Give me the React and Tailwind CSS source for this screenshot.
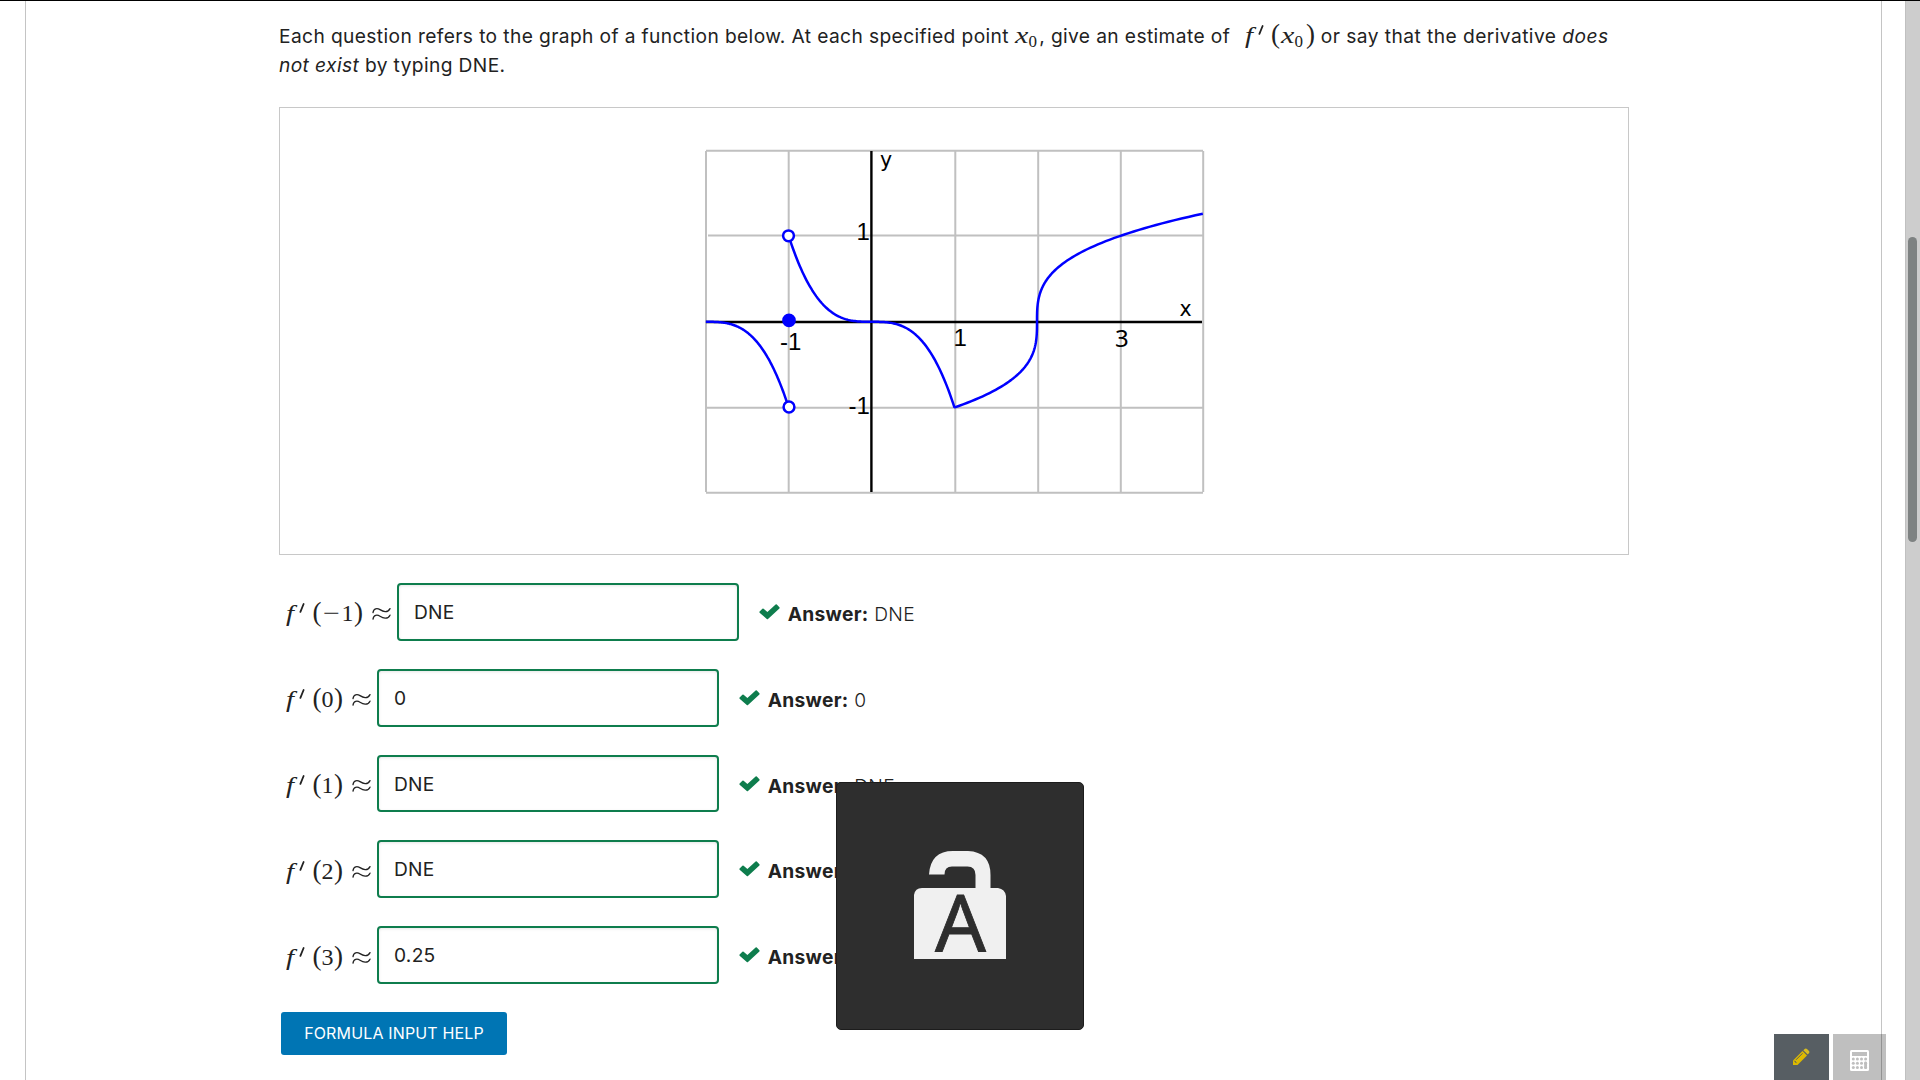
import React from "react";

const X0 = 165.6;
const Y0 = 171.8;
const UX = 82.9;
const UY = 85.8;

function curve(fn, from, to, steps = 120) {
  const pts = [];
  for (let i = 0; i <= steps; i++) {
    const x = from + ((to - from) * i) / steps;
    pts.push(`${(X0 + x * UX).toFixed(2)},${(Y0 - fn(x) * UY).toFixed(2)}`);
  }
  return pts.join(" ");
}

// Sampled along y, so the vertical tangent at x = 2 stays smooth.
function cubeRootBranch() {
  const pts = [];
  const end = Math.cbrt(2);
  for (let i = 0; i <= 120; i++) {
    const y = -1 + ((end + 1) * i) / 120;
    const x = 2 + y * y * y;
    pts.push(`${(X0 + x * UX - 0.4).toFixed(2)},${(Y0 - y * UY).toFixed(2)}`);
  }
  return pts.join(" ");
}

function Graph() {
  return (
    <svg width="500" height="345" viewBox="0 0 500 345" className="block shrink-0 overflow-visible" fill="none">
      <g stroke="#c0c0c0" strokeWidth="2">
        <path d="M0 .8H497M2 85.5H497M1 257.7H497M0 342.7H497" />
        <path d="M0 1V342M82.7 1V342M249.3 1V342M332.2 1V342M414.8 1V342M497.2 1V342" />
      </g>
      <path d="M165.4 1V342M0 172H496" stroke="#000" strokeWidth="2.4" />
      <g fill="#000" fontSize="20.5" fontFamily='"DejaVu Sans", sans-serif'>
        <text x="174" y="17">y</text>
        <text x="473.5" y="165.5">x</text>
      </g>
      <g fill="#000" fontSize="24" fontFamily='"Liberation Sans", sans-serif'>
        <text x="150.5" y="90.2">1</text>
        <text x="74" y="200.2">-1</text>
        <text x="142.5" y="264.2">-1</text>
        <text x="247.5" y="195.5">1</text>
        <text x="409" y="197.2" fontFamily='"Noto Sans", sans-serif'>3</text>
      </g>
      <g stroke="#00f" strokeWidth="2.5" strokeLinejoin="round">
        <polyline points={curve((x) => -Math.pow(x + 2, 3), -2, -1)} />
        <polyline points={curve((x) => -Math.pow(x, 3), -1, 1)} />
        <polyline points={cubeRootBranch()} />
        <circle cx="82.5" cy="85.8" r="5.4" fill="#fff" />
        <circle cx="83" cy="257" r="5.4" fill="#fff" />
        <circle cx="83" cy="170.4" r="5.6" fill="#00f" />
      </g>
    </svg>
  );
}

function FPrime() {
  return (
    <>
      <span className="w-[17px] pl-[4px] italic">
        <span className="inline-block origin-left scale-x-[1.2]">f</span>
      </span>
      <span className="w-[11px]">
        <svg width="7" height="18" viewBox="0 0 7 18" className="inline-block align-baseline">
          <path d="M4.6 1L1.4 8.8" stroke="#222" strokeWidth="1.8" strokeLinecap="round" />
        </svg>
      </span>
    </>
  );
}

function Label({ value }) {
  const negative = value < 0;
  return (
    <span className="flex shrink-0 items-baseline whitespace-nowrap pt-[2px] font-['Liberation_Serif',serif] text-[24px] leading-[30px] text-[#222]">
      <FPrime />
      <span className="ml-[2.5px] w-[9px] text-[27px]">(</span>
      {negative && (
        <span className="w-[20px] pl-px">
          <span className="inline-block origin-left scale-x-[1.25]">−</span>
        </span>
      )}
      <span className="w-[12.5px]">{Math.abs(value)}</span>
      <span className="w-[18px] text-[27px]">)</span>
      <svg width="19" height="14" viewBox="0 0 19 14" className="mr-[6px]" fill="none" stroke="#222" strokeWidth="1.3" strokeLinecap="round">
        <path d="M1 5.6C1.6 1.2 5.2 .8 8 2.6S15.6 6.4 18 1.6M1 12.2C1.6 7.8 5.2 7.4 8 9.2S15.6 13 18 8.2" />
      </svg>
    </span>
  );
}

function Check() {
  return (
    <svg width="21" height="16" viewBox="0 0 21 16" className="mr-[7.5px] shrink-0">
      <path d="M.6 7.5L3.4 4.7q.6-.5 1.2 0L8.4 8 16.6.6q.6-.5 1.2 0l2.6 2.7q.5.6 0 1.1L9 15q-.6.6-1.2 0L.6 8.7q-.5-.6 0-1.2z" fill="#0e7d4d" />
    </svg>
  );
}

const answers = [
  { value: -1, text: "DNE" },
  { value: 0, text: "0" },
  { value: 1, text: "DNE" },
  { value: 2, text: "DNE" },
  { value: 3, text: "0.25" },
];

function AnswerRow({ value, text }) {
  return (
    <div className="flex h-[57.8px] items-center">
      <Label value={value} />
      <input
        readOnly
        value={text}
        className="h-[57.8px] w-[342.2px] shrink-0 rounded-[4px] border-2 border-[#0e7d4d] bg-white px-[15px] text-[19.2px] tracking-[0.25px] text-[#222] shadow-[inset_0_1px_3px_rgba(0,0,0,0.1)] outline-none"
      />
      <span className="ml-5 flex items-center text-[19.2px] leading-[28.8px]">
        <Check />
        <span className="pt-[5px] tracking-[0.3px]">
          <b className="font-bold">Answer:</b> <span className="font-light">{text}</span>
        </span>
      </span>
    </div>
  );
}

function LockOverlay() {
  return (
    <div className="absolute left-[836px] top-[781px] flex h-[248px] w-[248px] items-center justify-center rounded-[5px] border border-[#1c1c1c] bg-[#2e2e2e]">
      <svg width="94" height="110" viewBox="0 0 94 110" className="mb-[2px] mr-px">
        <path d="M1 109V45Q2 38 9 38H62.5V25Q62.5 16.5 54.5 16.5H39Q31.5 16.5 31.5 24.5H16Q17.5 1 40 1H55Q77.5 2 77.5 25V38H85Q92 39 93 46V109z" fill="#f0f0f0" />
        <text x="47.5" y="101" textAnchor="middle" fontSize="79" fill="#2e2e2e" stroke="#2e2e2e" strokeWidth=".8" fontFamily='"Noto Sans", sans-serif' textLength="51" lengthAdjust="spacingAndGlyphs">A</text>
      </svg>
    </div>
  );
}

function CornerTools() {
  return (
    <div className="absolute bottom-0 left-[1774px] flex h-[46px] gap-[4px]">
      <button className="flex w-[55px] items-center justify-center bg-[#575e63]">
        <svg width="18" height="18" viewBox="0 0 18 18" className="mr-px">
          <path d="M1 12.5L10.500 3l4.500 4.500L5.500 17H1z" fill="#dcb900" />
          <path d="M11.300 2.200L13 .8q1-.7 2 .1l2 2q.8 1 .1 2l-1.400 1.600z" fill="#d8bd20" />
          <path d="M4 11.800L10.500 5.300M2.400 13.200l1 .2.200 1 .9.300" stroke="#575e63" strokeWidth="1" fill="none" />
        </svg>
      </button>
      <button className="flex w-[53px] items-center justify-center bg-black/25">
        <svg width="19" height="21" viewBox="0 0 19 21" className="mr-px mt-[7px]">
          <rect width="19" height="21" rx="1.5" fill="#fff" />
          <path d="M2 2h15v4H2z" fill="#bfbfbf" />
          {[9, 13.2, 17.4].map((y) =>
            [3.3, 7.4, 11.5, 15.6].map((x) => <circle key={`${x}-${y}`} cx={x} cy={y} r="1.5" fill="#bfbfbf" />)
          )}
          <path d="M15.6 13V17.6" stroke="#bfbfbf" strokeWidth="2.8" strokeLinecap="round" />
        </svg>
      </button>
    </div>
  );
}

export default function App() {
  return (
    <div className="relative flex h-[1080px] w-[1920px] overflow-hidden border-t border-black bg-white font-['Inter',sans-serif] text-[19.2px] leading-[28.8px] text-[#222]">
      <main className="ml-[25px] w-[1857px] shrink-0 border-x border-[#c4c4c4] pl-[253px]">
        <div className="w-[1360px] whitespace-nowrap pt-[20.5px] tracking-[0.38px]">
          <p className="h-[29.3px]">
            Each question refers to the graph of a function below. At each specified point{" "}
            <span className="inline-flex h-0 w-[24.5px] items-baseline font-['Liberation_Serif',serif] text-[24px] leading-none tracking-normal">
              <i className="inline-block origin-left scale-x-[1.25] pr-[3px]">x</i>
              <span className="relative top-[4px] text-[17px]">0</span>
            </span>
            , give an estimate of{" "}
            <span className="ml-[5px] inline-flex h-0 items-baseline font-['Liberation_Serif',serif] text-[24px] leading-none tracking-normal">
              <FPrime />
              <span className="ml-[2px] w-[10px] text-[27px] leading-[20px]">(</span>
              <span className="w-[25px]">
                <i className="inline-block origin-left scale-x-[1.25] pr-[3px]">x</i>
                <span className="relative top-[4px] text-[17px]">0</span>
              </span>
              <span className="w-[9px] text-[27px] leading-[20px]">)</span>
            </span>{" "}
            <span className="tracking-[0.44px]">
              or say that the derivative <i>does</i>
            </span>
          </p>
          <p className="h-[28.8px]">
            <i>not exist</i> by typing DNE.
          </p>
        </div>
        <div className="mt-[27.5px] flex h-[448px] w-[1350px] items-start border border-[#c8c8c8] pl-[426px] pt-[42px]">
          <Graph />
        </div>
        <div className="flex flex-col gap-[28px] pl-[3px] pt-[28px]">
          {answers.map((a) => (
            <AnswerRow key={a.value} {...a} />
          ))}
        </div>
        <button className="ml-[2px] mt-[28px] flex h-[43px] w-[226px] items-center justify-center rounded-[3px] bg-[#0075b4] text-[16px] tracking-[0.15px] text-white">
          FORMULA INPUT HELP
        </button>
      </main>
      <div className="ml-auto flex w-[15px] justify-center border-l border-[#c0c0c0] bg-[#cdcdcd] pr-px">
        <div className="mt-[236px] h-[305px] w-[9px] rounded-full bg-[#7e8282]" />
      </div>
      <LockOverlay />
      <CornerTools />
    </div>
  );
}
